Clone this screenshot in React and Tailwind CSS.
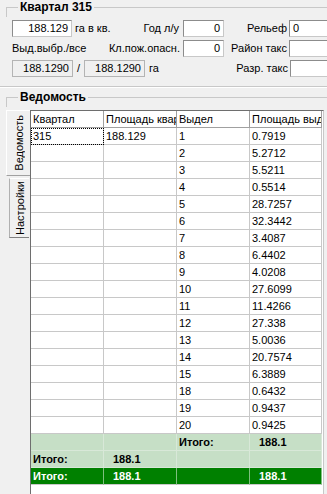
import React from 'react';

const rows = [
  ['315', '188.129', '1', '0.7919'],
  ['', '', '2', '5.2712'],
  ['', '', '3', '5.5211'],
  ['', '', '4', '0.5514'],
  ['', '', '5', '28.7257'],
  ['', '', '6', '32.3442'],
  ['', '', '7', '3.4087'],
  ['', '', '8', '6.4402'],
  ['', '', '9', '4.0208'],
  ['', '', '10', '27.6099'],
  ['', '', '11', '11.4266'],
  ['', '', '12', '27.338'],
  ['', '', '13', '5.0036'],
  ['', '', '14', '20.7574'],
  ['', '', '15', '6.3889'],
  ['', '', '18', '0.6432'],
  ['', '', '19', '0.9437'],
  ['', '', '20', '0.9425'],
];

const Input = ({ w, children, right, ro }) => (
  <div
    className={`h-[17px] shrink-0 border px-[3px] leading-[15px] overflow-hidden ${ro ? 'bg-[#f0f0f0] border-[#b4b4b4]' : 'bg-white border-[#c8c8c8] border-t-[#8c8c8c] border-l-[#8c8c8c]'} ${right ? 'text-right' : ''} ${w}`}
  >
    {children}
  </div>
);

const GroupTitle = ({ children }) => (
  <div className="flex items-start h-[18px]">
    <div className="ml-[6px] mt-[7px] w-[12px] h-[10px] border-t border-l border-[#c8c8c8]" />
    <div className="px-[2px] font-bold text-[12px] leading-[14px]">{children}</div>
    <div className="flex-1 mt-[7px] border-t border-[#c8c8c8]" />
  </div>
);

const Cell = ({ children, cls = '', focus }) => (
  <div className={`h-[17px] border-r border-b border-[#c8c8c8] pl-[2px] leading-[16px] overflow-hidden ${cls} ${focus ? 'outline outline-1 outline-dotted outline-black -outline-offset-1' : ''}`}>
    {children}
  </div>
);

const light = 'bg-[#c6dfc6] border-[#d8e8d8]';
const dark = 'bg-[#008000] border-[#008000] border-r-[#7fbf7f] text-white';

export default function App() {
  return (
    <div
      className="w-[327px] h-[494px] overflow-hidden bg-[#f0f0f0] text-[11px] text-black whitespace-nowrap"
      style={{ fontFamily: '"Liberation Sans", Arial, sans-serif' }}
    >
      <GroupTitle>Квартал 315</GroupTitle>

      <div className="mt-[2px] flex items-center pl-[12px]">
        <Input w="w-[60px]" right>188.129</Input>
        <span className="w-[70px] shrink-0 pl-[3px]">га в кв.</span>
        <span className="w-[37px] shrink-0 text-right">Год л/у</span>
        <div className="w-[4px] shrink-0" />
        <Input w="w-[41px]" right>0</Input>
        <span className="w-[63px] shrink-0 text-right">Рельеф</span>
        <div className="w-[2px] shrink-0" />
        <Input w="w-[50px]">0</Input>
      </div>

      <div className="mt-[3px] flex items-center pl-[12px]">
        <span className="w-[94px] shrink-0">Выд.выбр./все</span>
        <span className="w-[74px] shrink-0 text-right">Кл.пож.опасн.</span>
        <div className="w-[3px] shrink-0" />
        <Input w="w-[41px]" right>0</Input>
        <span className="w-[63px] shrink-0 text-right">Район такс</span>
        <div className="w-[2px] shrink-0" />
        <Input w="w-[50px]" />
      </div>

      <div className="mt-[3px] flex items-center pl-[12px]">
        <Input w="w-[61px]" ro right>188.1290</Input>
        <span className="w-[11px] shrink-0 text-center">/</span>
        <Input w="w-[61px]" ro right>188.1290</Input>
        <span className="w-[79px] shrink-0 pl-[4px]">га</span>
        <span className="w-[64px] shrink-0 text-right">Разр. такс</span>
        <div className="w-[2px] shrink-0" />
        <Input w="w-[50px]" />
      </div>

      <div className="mt-[9px] h-[2px] border-t border-[#c8c8c8] border-b border-b-white" />

      <div className="mt-[2px]">
        <GroupTitle>Ведомость</GroupTitle>
      </div>

      <div className="flex h-[386px]">
        <div className="w-[30px] shrink-0 flex flex-col pt-[2px]">
          <div className="ml-[6px] w-[24px] h-[66px] border-t border-l border-b border-white border-b-[#a0a0a0] bg-[#f0f0f0] flex items-center justify-center">
            <span className="[writing-mode:vertical-rl] rotate-180 leading-[12px]">Ведомость</span>
          </div>
          <div className="mt-[2px] ml-[9px] w-[20px] h-[60px] border-t border-l border-b border-white border-l-[#b0b0b0] border-b-[#808080] bg-[#f0f0f0] flex items-center justify-center">
            <span className="[writing-mode:vertical-rl] rotate-180 leading-[12px]">Настройки</span>
          </div>
        </div>

        <div className="mt-[2px] w-[294px] shrink-0 bg-white border-l border-t border-[#6e6e6e] border-r border-r-[#c8c8c8]">
          <div className="grid grid-cols-[73px_73px_73px_72px]">
            {['Квартал', 'Площадь квартала', 'Выдел', 'Площадь выдела'].map((h) => (
              <div key={h} className="h-[17px] border-r border-b border-[#a0a0a0] pl-[2px] leading-[16px] overflow-hidden">
                {h}
              </div>
            ))}
            {rows.map((r, i) =>
              r.map((c, j) => (
                <Cell key={i + '-' + j} focus={i === 0 && j === 0}>
                  {c}
                </Cell>
              ))
            )}
            <Cell cls={light} />
            <Cell cls={light} />
            <Cell cls={`${light} font-bold`}>Итого:</Cell>
            <Cell cls={`${light} font-bold pl-[9px]`}>188.1</Cell>

            <Cell cls={`${light} font-bold`}>Итого:</Cell>
            <Cell cls={`${light} font-bold pl-[9px]`}>188.1</Cell>
            <Cell cls={light} />
            <Cell cls={light} />

            <Cell cls={`${dark} font-bold`}>Итого:</Cell>
            <Cell cls={`${dark} font-bold pl-[9px]`}>188.1</Cell>
            <Cell cls={dark} />
            <Cell cls={`${dark} font-bold pl-[9px]`}>188.1</Cell>
          </div>
        </div>
      </div>
    </div>
  );
}
